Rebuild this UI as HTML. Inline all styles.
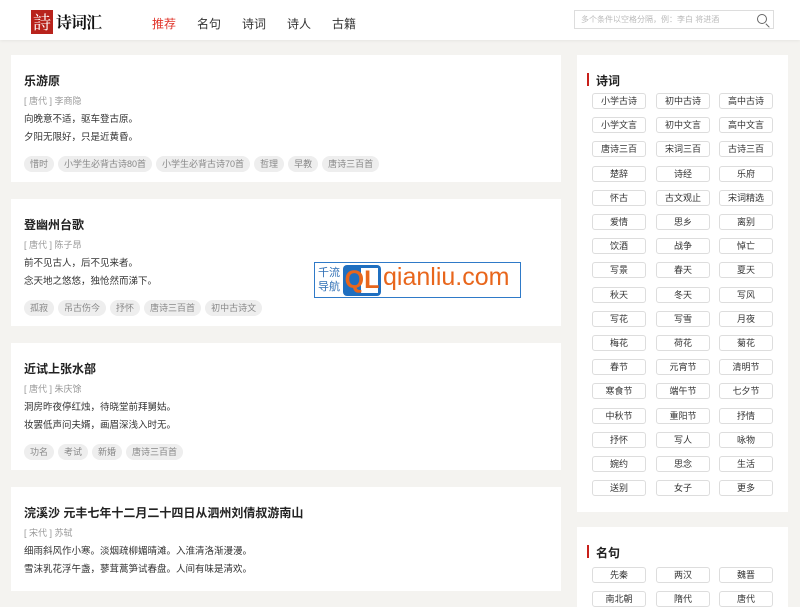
<!DOCTYPE html>
<html><head><meta charset="utf-8"><style>
*{margin:0;padding:0;box-sizing:border-box}
body{width:800px;height:599px;overflow:hidden;background:#f4f3f0;font-family:"Liberation Sans","Noto Sans CJK SC",sans-serif;position:relative;color:#333}
.hdr{position:absolute;left:0;top:0;width:800px;height:40px;background:#fff;box-shadow:0 1px 3px rgba(0,0,0,.06)}
.logo1{position:absolute;left:31px;top:10px;width:22px;height:24px;background:#b8231c;color:#fff;font-size:18px;line-height:24px;text-align:center;font-family:"Noto Serif CJK SC",serif}
.logo2{position:absolute;left:56px;top:10px;font-size:16px;font-weight:bold;color:#111;font-family:"Noto Serif CJK SC",serif;letter-spacing:-1px}
.nav{position:absolute;top:15px;font-size:12px;color:#333}
.search{position:absolute;left:574px;top:10px;width:200px;height:19px;border:1px solid #ddd;font-size:8px;color:#bbb;padding:4px 6px;line-height:10px}
.search i{position:absolute;right:6px;top:3px;width:10px;height:10px;border:1.3px solid #666;border-radius:50%}
.search i:after{content:"";position:absolute;right:-4px;bottom:-3px;width:5px;height:1.3px;background:#666;transform:rotate(45deg)}
.card{position:absolute;left:11px;width:550px;background:#fff}
.card h2{position:absolute;left:13px;top:17px;font-size:12px;font-weight:bold;color:#222}
.card .au{position:absolute;left:13px;top:39px;font-size:9px;color:#999}
.card .l{position:absolute;left:13px;font-size:9.5px;color:#333}
.tags{position:absolute;left:13px;top:101px;display:flex;gap:4px}
.tags span{background:#eee;border-radius:8px;font-size:9px;color:#888;padding:0 6px;height:16px;line-height:16px}
.side{position:absolute;left:577px;width:211px;background:#fff}
.side h3{position:absolute;left:19px;top:17px;font-size:12px;font-weight:bold;color:#222}
.side .bar{position:absolute;left:10px;top:18px;width:2px;height:13px;background:#c8201a}
.b{position:absolute;width:54px;height:16px;border:1px solid #ddd;border-radius:3px;font-size:9px;line-height:14px;text-align:center;color:#333}
.wm{position:absolute;left:314px;top:262px;width:207px;height:36px;border:1px solid #2f7ac8;background:#fff;overflow:hidden}
</style></head><body>
<div class="hdr">
<div class="logo1">詩</div><div class="logo2">诗词汇</div>
<span class="nav" style="left:152px;color:#e0352b">推荐</span>
<span class="nav" style="left:197px">名句</span>
<span class="nav" style="left:242px">诗词</span>
<span class="nav" style="left:287px">诗人</span>
<span class="nav" style="left:332px">古籍</span>
<div class="search">多个条件以空格分隔，例：李白 将进酒<i></i></div>
</div>

<div class="card" style="top:55px;height:127px"><h2>乐游原</h2><div class="au">[ 唐代 ] 李商隐</div>
<div class="l" style="top:56px">向晚意不适，驱车登古原。</div><div class="l" style="top:74px">夕阳无限好，只是近黄昏。</div>
<div class="tags"><span>惜时</span><span>小学生必背古诗80首</span><span>小学生必背古诗70首</span><span>哲理</span><span>早教</span><span>唐诗三百首</span></div></div>

<div class="card" style="top:199px;height:127px"><h2>登幽州台歌</h2><div class="au">[ 唐代 ] 陈子昂</div>
<div class="l" style="top:56px">前不见古人，后不见来者。</div><div class="l" style="top:74px">念天地之悠悠，独怆然而涕下。</div>
<div class="tags"><span>孤寂</span><span>吊古伤今</span><span>抒怀</span><span>唐诗三百首</span><span>初中古诗文</span></div></div>

<div class="card" style="top:343px;height:127px"><h2>近试上张水部</h2><div class="au">[ 唐代 ] 朱庆馀</div>
<div class="l" style="top:56px">洞房昨夜停红烛，待晓堂前拜舅姑。</div><div class="l" style="top:74px">妆罢低声问夫婿，画眉深浅入时无。</div>
<div class="tags"><span>功名</span><span>考试</span><span>新婚</span><span>唐诗三百首</span></div></div>

<div class="card" style="top:487px;height:104px"><h2>浣溪沙 元丰七年十二月二十四日从泗州刘倩叔游南山</h2><div class="au">[ 宋代 ] 苏轼</div>
<div class="l" style="top:56px">细雨斜风作小寒。淡烟疏柳媚晴滩。入淮清洛渐漫漫。</div><div class="l" style="top:74px">雪沫乳花浮午盏，蓼茸蒿笋试春盘。人间有味是清欢。</div></div>

<div class="side" style="top:55px;height:457px"><div class="bar"></div><h3>诗词</h3>
<div id="g1"></div></div>
<div class="side" style="top:527px;height:80px"><div class="bar"></div><h3>名句</h3></div>

<div class="wm">
<div style="position:absolute;left:3px;top:3px;font-size:11px;line-height:14px;color:#2f6fb5">千流<br>导航</div>
<div style="position:absolute;left:28px;top:2px;width:38px;height:31px;background:#1f6fc0;border-radius:4px"></div>
<div style="position:absolute;left:46px;top:5px;width:17px;height:25px;background:#fff"></div>
<div style="position:absolute;left:29px;top:0px;width:36px;color:#e8661c;font-weight:bold;font-size:25px;line-height:34px;text-align:center">QL</div>
<div style="position:absolute;left:68px;top:0px;font-size:25px;color:#e8661c">qianliu.com</div>
</div>

<script>
var t=["小学古诗","初中古诗","高中古诗","小学文言","初中文言","高中文言","唐诗三百","宋词三百","古诗三百","楚辞","诗经","乐府","怀古","古文观止","宋词精选","爱情","思乡","离别","饮酒","战争","悼亡","写景","春天","夏天","秋天","冬天","写风","写花","写雪","月夜","梅花","荷花","菊花","春节","元宵节","清明节","寒食节","端午节","七夕节","中秋节","重阳节","抒情","抒怀","写人","咏物","婉约","思念","生活","送别","女子","更多"];
var h="";var xs=[15,79,142];
t.forEach(function(s,i){h+='<div class="b" style="left:'+xs[i%3]+'px;top:'+(38+Math.floor(i/3)*24.2)+'px">'+s+'</div>';});
var m=["先秦","两汉","魏晋","南北朝","隋代","唐代"];
var h2="";m.forEach(function(s,i){h2+='<div class="b" style="left:'+xs[i%3]+'px;top:'+(40+Math.floor(i/3)*24)+'px">'+s+'</div>';});
document.getElementById("g1").outerHTML=h;
document.querySelectorAll(".side")[1].insertAdjacentHTML("beforeend",h2);
</script>
</body></html>
